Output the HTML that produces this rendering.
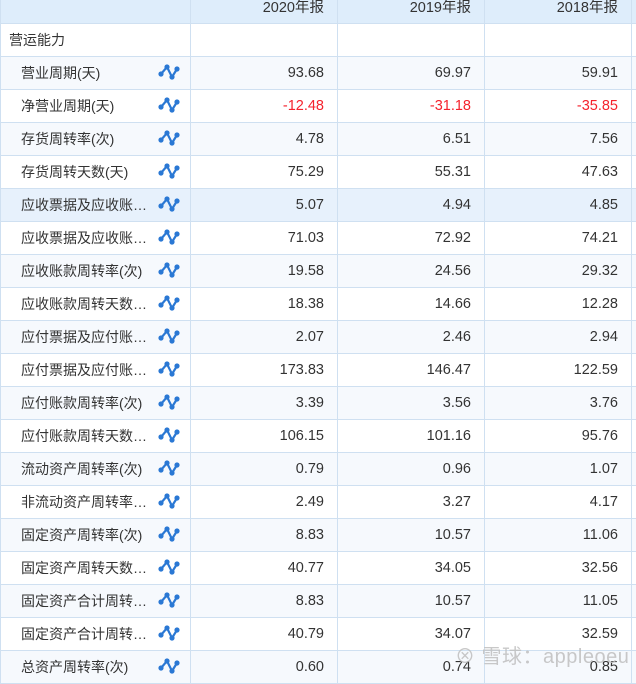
<!DOCTYPE html>
<html><head><meta charset="utf-8"><style>
body{margin:0;width:636px;height:673px;overflow:hidden;background:#fff;font-family:"Liberation Sans","Noto Sans CJK SC",sans-serif;font-size:14px;color:#333}
table{border-collapse:collapse;table-layout:fixed;position:absolute;left:0;top:-10px;width:651px}
td{border:1px solid #cfe0f1;height:32px;padding:0;white-space:nowrap;overflow:hidden}
tr.h td{background:#deedfb;vertical-align:bottom;padding-bottom:6px;height:26px}
td.n{text-align:right;padding-right:13px;font-size:14.5px}
td.l{padding-left:20px;position:relative}
tr.t td{background:#f6f9fd}
tr.hv td{background:#e7f1fc}
.r{color:#f5222d}
svg{position:absolute;left:157px;top:7px}
.wm{position:absolute;left:455px;top:640px;font-size:20px;color:rgba(190,190,190,.85);letter-spacing:.5px}
</style></head><body>
<table>
<colgroup><col style="width:190px"><col style="width:147px"><col style="width:147px"><col style="width:147px"><col style="width:20px"></colgroup>
<tr class="h"><td></td><td class="n">2020年报</td><td class="n">2019年报</td><td class="n">2018年报</td><td></td></tr>
<tr><td style="padding-left:8px">营运能力</td><td></td><td></td><td></td><td></td></tr>
<tbody id="b"></tbody>
</table>
<div class="wm">⊗ 雪球：appleoeu</div>
<script>
var d=[["营业周期(天)","93.68","69.97","59.91"],["净营业周期(天)","-12.48","-31.18","-35.85"],["存货周转率(次)","4.78","6.51","7.56"],["存货周转天数(天)","75.29","55.31","47.63"],["应收票据及应收账…","5.07","4.94","4.85"],["应收票据及应收账…","71.03","72.92","74.21"],["应收账款周转率(次)","19.58","24.56","29.32"],["应收账款周转天数…","18.38","14.66","12.28"],["应付票据及应付账…","2.07","2.46","2.94"],["应付票据及应付账…","173.83","146.47","122.59"],["应付账款周转率(次)","3.39","3.56","3.76"],["应付账款周转天数…","106.15","101.16","95.76"],["流动资产周转率(次)","0.79","0.96","1.07"],["非流动资产周转率…","2.49","3.27","4.17"],["固定资产周转率(次)","8.83","10.57","11.06"],["固定资产周转天数…","40.77","34.05","32.56"],["固定资产合计周转…","8.83","10.57","11.05"],["固定资产合计周转…","40.79","34.07","32.59"],["总资产周转率(次)","0.60","0.74","0.85"]];
var ic='<svg width="22" height="16" viewBox="0 0 22 16"><polyline points="3,10 9,3 14,13 19,5" fill="none" stroke="#2a78d4" stroke-width="2.2"/><circle cx="3" cy="10" r="2.6" fill="#2a78d4"/><circle cx="9" cy="3" r="2.6" fill="#2a78d4"/><circle cx="14" cy="13" r="2.6" fill="#2a78d4"/><circle cx="19" cy="5" r="2.6" fill="#2a78d4"/></svg>';
var h='';d.forEach(function(r,i){var c=i==4?'hv':(i%2==0?'t':'');var k=r[1][0]=='-'?' r':'';h+='<tr class="'+c+'"><td class="l">'+r[0]+ic+'</td><td class="n'+k+'">'+r[1]+'</td><td class="n'+k+'">'+r[2]+'</td><td class="n'+k+'">'+r[3]+'</td><td></td></tr>';});
document.getElementById('b').innerHTML=h;
</script>
</body></html>
